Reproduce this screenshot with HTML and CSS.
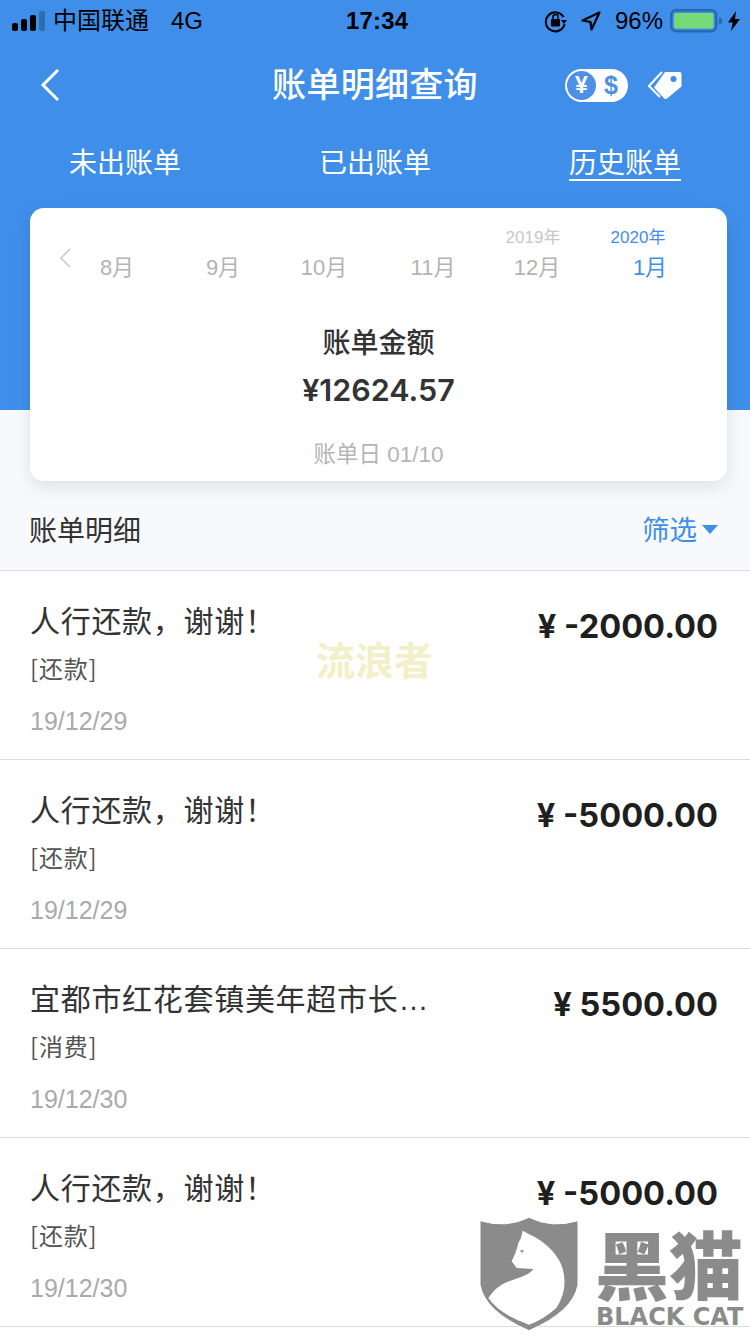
FILE: index.html
```html
<!DOCTYPE html>
<html lang="zh">
<head>
<meta charset="utf-8">
<title>账单明细查询</title>
<link rel="stylesheet" href="styles.css">
</head>
<body>
<div class="page">
  <header class="hero">
    <div class="status">
      <div class="status-left">
        <svg class="signal" width="34" height="22" viewBox="0 0 34 22"><rect x="0" y="12" width="6" height="8" rx="2" fill="#000"/><rect x="9" y="8" width="6" height="12" rx="2" fill="#000"/><rect x="18" y="4" width="6" height="16" rx="2" fill="#000"/><rect x="27" y="0" width="6" height="20" rx="2" fill="#2f6cb0"/></svg>
        <span class="carrier">中国联通</span>
        <span class="net">4G</span>
      </div>
      <div class="time">17:34</div>
      <div class="status-right">
        <svg class="lock" width="24" height="24" viewBox="0 0 24 24"><path d="M19.5 8A9.5 9.5 0 1 0 20.6 15" fill="none" stroke="#000" stroke-width="2"/><path d="M17 11h6l-3 4z" fill="#000"/><rect x="7" y="10" width="9" height="7.5" rx="1" fill="#000"/><path d="M9 10V8a2.5 2.5 0 0 1 5 0v2" fill="none" stroke="#000" stroke-width="1.6"/></svg>
        <svg class="arrow" width="20" height="20" viewBox="0 0 20 20"><path d="M18.5 1.5 1.5 9.5l8 1.5 1 7.5z" fill="none" stroke="#000" stroke-width="2.2" stroke-linejoin="round"/></svg>
        <span class="pct">96%</span>
        <svg class="battery" width="53" height="24" viewBox="0 0 53 24"><rect x="1.2" y="1.2" width="45" height="21" rx="5" fill="none" stroke="#2a68ab" stroke-width="2.4"/><rect x="4" y="4" width="39.5" height="15.5" rx="2" fill="#76d975"/><path d="M49 8.5q3.500 1 3.500 3.500T49 15.500z" fill="#2a68ab"/></svg>
        <svg class="bolt" width="12" height="20" viewBox="0 0 12 20"><path d="M8 0 0 11.500h4.700L3 20l9-12H7z" fill="#000"/></svg>
      </div>
    </div>
    <nav class="nav">
      <svg class="back" width="20" height="34" viewBox="0 0 20 34"><path d="M18 2 3 17l15 15" fill="none" stroke="#fff" stroke-width="3"/></svg>
      <h1 class="title">账单明细查询</h1>
      <div class="nav-icons">
        <div class="currency"><span class="yen">¥</span><span class="usd">$</span></div>
        <svg class="tag" width="34" height="28" viewBox="0 0 34 28"><path d="M14 1 1 15l11 11" fill="none" stroke="#fff" stroke-width="2"/><path d="M17 1h14.500a2 2 0 0 1 2 2v12.500L19 27.500a2 2 0 0 1-2.800 0L6 16.500z" fill="#fff"/><circle cx="25.500" cy="8" r="3" fill="#3f8fea"/></svg>
      </div>
    </nav>
    <div class="tabs">
      <div class="tab"><span class="tab-label">未出账单</span></div>
      <div class="tab"><span class="tab-label">已出账单</span></div>
      <div class="tab"><span class="tab-label is-active">历史账单</span></div>
    </div>
    <section class="card">
      <div class="months">
        <svg class="month-prev" width="12" height="20" viewBox="0 0 12 20"><path d="M11 1 2 10l9 9" fill="none" stroke="#c9c9c9" stroke-width="1.6"/></svg>
        <div class="month-grid">
          <div class="month"><span class="year"></span><span class="mon">8月</span></div>
          <div class="month"><span class="year"></span><span class="mon">9月</span></div>
          <div class="month"><span class="year"></span><span class="mon">10月</span></div>
          <div class="month"><span class="year"></span><span class="mon">11月</span></div>
          <div class="month is-last-year"><span class="year">2019年</span><span class="mon">12月</span></div>
          <div class="month is-current"><span class="year">2020年</span><span class="mon">1月</span></div>
        </div>
      </div>
      <div class="amount-label">账单金额</div>
      <div class="amount">¥12624.57</div>
      <div class="bill-day">账单日 01/10</div>
    </section>
  </header>

  <div class="summary">
    <span class="summary-title">账单明细</span>
    <span class="filter">筛选<i class="caret"></i></span>
  </div>

  <ul class="rows">
    <li class="row">
      <div class="row-main"><div class="row-title">人行还款，谢谢！</div><div class="row-type">[还款]</div><div class="row-date">19/12/29</div></div>
      <div class="row-amount"><span class="cur">¥</span> -2000.00</div>
    </li>
    <li class="row">
      <div class="row-main"><div class="row-title">人行还款，谢谢！</div><div class="row-type">[还款]</div><div class="row-date">19/12/29</div></div>
      <div class="row-amount"><span class="cur">¥</span> -5000.00</div>
    </li>
    <li class="row">
      <div class="row-main"><div class="row-title">宜都市红花套镇美年超市长<span class="ell">…</span></div><div class="row-type">[消费]</div><div class="row-date">19/12/30</div></div>
      <div class="row-amount"><span class="cur">¥</span> 5500.00</div>
    </li>
    <li class="row">
      <div class="row-main"><div class="row-title">人行还款，谢谢！</div><div class="row-type">[还款]</div><div class="row-date">19/12/30</div></div>
      <div class="row-amount"><span class="cur">¥</span> -5000.00</div>
    </li>
  </ul>

  <div class="watermark">流浪者</div>
  <div class="logo">
    <svg class="shield" width="104" height="120" viewBox="0 0 312 360"><path d="M6 14Q85 38 153 4 221 38 300 14V206Q286 286 153 344 20 286 6 206Z" fill="#8b8b8b" stroke="#fff" stroke-width="3"/><path d="M134 44 152 54Q222 86 250 146 275 216 235 276 196 311 153 326 66 296 31 246 56 206 106 191 156 176 166 159L116 156 101 136Q116 106 121 81 131 66 134 44Z" fill="#fff"/><path d="M125 104l12-3-3 10z" fill="#8b8b8b"/></svg>
    <div class="logo-text">
      <div class="logo-cn">黑猫</div>
      <div class="logo-en">BLACK CAT</div>
    </div>
  </div>
</div>
</body>
</html>
```
FILE: styles.css
```css
* { box-sizing: border-box; }
html, body { margin: 0; padding: 0; }
body {
  width: 750px;
  height: 1334px;
  overflow: hidden;
  background: #fff;
  font-family: "Liberation Sans", "Noto Sans CJK SC", sans-serif;
  color: #333;
}
.page { position: relative; width: 750px; height: 1334px; overflow: hidden; background: #fff; }

.hero { height: 410px; background: #3f8fea; }

.status { display: flex; align-items: center; height: 42px; padding: 0 10px 0 12px; color: #000; font-size: 24px; }
.status-left { display: flex; align-items: center; width: 334px; }
.signal { margin-right: 7px; margin-top: 2px; }
.carrier { font-family: "Noto Sans CJK SC", sans-serif; line-height: 30px; margin-top: -4px; }
.net { margin-left: 22px; }
.time { font-weight: 700; letter-spacing: 0.2px; }
.status-right { display: flex; align-items: center; margin-left: auto; }
.lock { margin-right: 13px; }
.arrow { margin-right: 14px; }
.pct { margin-right: 7px; }
.battery { margin-right: 5px; }

.nav { display: flex; align-items: center; justify-content: space-between; height: 86px; padding: 0 68px 0 40px; position: relative; }
.back { flex: none; }
.title { position: absolute; left: 0; right: 0; top: 0; margin: 0; text-align: center; font: 500 34px/82px "Noto Sans CJK SC", sans-serif; letter-spacing: 0.3px; color: #fff; }
.nav-icons { display: flex; align-items: center; gap: 20px; }
.currency { display: flex; align-items: center; width: 63px; height: 33px; border-radius: 17px; background: #fff; padding: 2px; }
.yen { width: 29px; height: 29px; border-radius: 50%; background: #4e90e5; color: #fff; text-align: center; font: 700 23px/29px "Liberation Sans", sans-serif; }
.usd { flex: 1; text-align: center; color: #4e90e5; font: 700 25px/29px "Liberation Sans", sans-serif; }
.tag { flex: none; }

.tabs { display: flex; height: 64px; padding-top: 13px; }
.tab { flex: 1; text-align: center; font: 400 28px/40px "Noto Sans CJK SC", sans-serif; color: #fff; }
.tab-label { display: inline-block; height: 40px; }
.tab-label.is-active { border-bottom: 2px solid #fff; }

.card { position: relative; margin: 16px 23px 0 30px; height: 273px; background: #fff; border-radius: 14px; box-shadow: 0 6px 18px rgba(0, 0, 0, 0.1); }
.months { display: flex; height: 80px; position: relative; }
.month-prev { position: absolute; left: 29px; top: 40px; }
.month-grid { display: grid; grid-template-columns: 106px 106px 96px 122px 86px 140px; margin-left: 34px; width: 656px; }
.month { display: flex; flex-direction: column; align-items: center; color: #b4b4b4; }
.year { height: 22px; margin-top: 19px; font-size: 17px; line-height: 22px; color: #c8c8c8; }
.mon { font-size: 22px; line-height: 30px; margin-top: 4px; }
.is-current { color: #3f8fea; }
.is-current .year { color: #3f8fea; margin-left: -24px; }
.is-last-year .year { margin-left: -8px; }

.amount-label { margin-top: 33px; text-align: center; font: 500 28px/40px "Noto Sans CJK SC", sans-serif; color: #333; }
.amount { margin-top: 9px; text-align: center; font: 600 30.5px/40px "Inter", sans-serif; color: #333; }
.bill-day { margin-top: 30px; text-align: center; font-size: 22.5px; line-height: 30px; color: #b5b5b5; }

.summary { display: flex; align-items: center; justify-content: space-between; height: 161px; padding: 75px 32px 0 29px; background: #f8f9fd; border-bottom: 1px solid #dcdcdc; }
.summary-title { font: 400 28px/40px "Noto Sans CJK SC", sans-serif; color: #333; margin-top: 2px; }
.filter { display: flex; align-items: center; font: 400 27.5px/40px "Noto Sans CJK SC", sans-serif; color: #3f8fea; }
.caret { width: 0; height: 0; margin-left: 5px; margin-top: 4px; border-left: 8.5px solid transparent; border-right: 8.5px solid transparent; border-top: 9px solid #3f8fea; }

.rows { list-style: none; margin: 0; padding: 0; }
.row { display: flex; justify-content: space-between; height: 189px; padding: 23px 32px 0 30px; border-bottom: 1px solid #dcdcdc; }
.row-main { display: flex; flex-direction: column; }
.row-title { height: 50px; font: 400 30px/50px "Noto Sans CJK SC", sans-serif; letter-spacing: 0.7px; color: #333; }
.ell { font-family: "Liberation Sans", sans-serif; }
.row-type { font: 400 24px/48px "Noto Sans CJK SC", sans-serif; letter-spacing: 0.8px; color: #555; }
.row-date { margin-top: 2px; font-size: 25px; line-height: 54px; color: #aaa; }
.row-amount { margin-top: 2px; font: 700 32.6px/60px "Inter", sans-serif; color: #1f1f1f; white-space: nowrap; }

.watermark { position: absolute; left: 316px; top: 630px; font: 700 39px/56px "Noto Sans CJK SC", sans-serif; color: #f3efc9; }
.logo { position: absolute; left: 478px; top: 1216px; display: flex; gap: 10px; }
.logo-text { width: 156px; height: 118px; display: flex; flex-direction: column; }
.logo-cn { font: 900 74px/64px "Noto Sans CJK SC", sans-serif; color: #8b8b8b; white-space: nowrap; margin: 14px 0 0 3px; }
.logo-en { font: 700 24px/26px "DejaVu Sans", sans-serif; color: #8b8b8b; white-space: nowrap; margin: 10px 0 0 4px; }
```
